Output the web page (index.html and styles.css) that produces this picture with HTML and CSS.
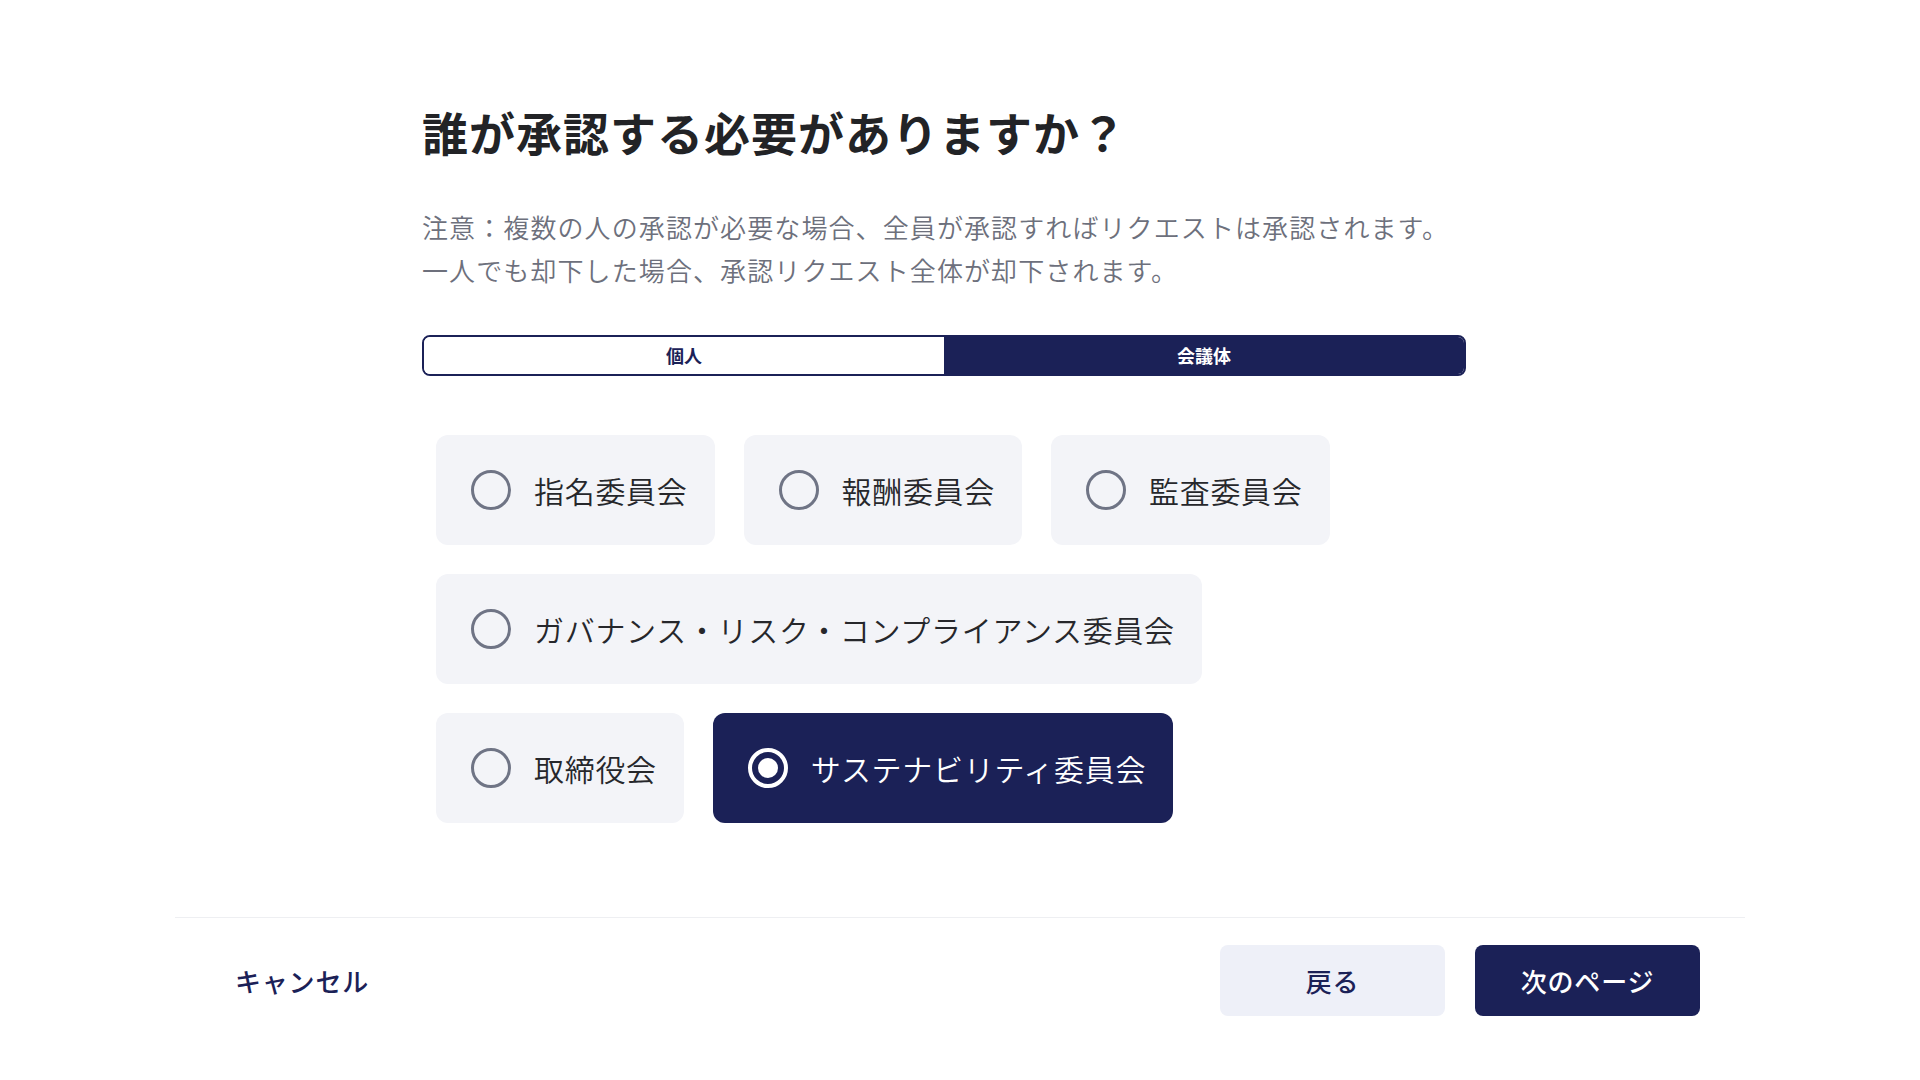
FILE: index.html
```html
<!DOCTYPE html>
<html lang="ja">
<head>
<meta charset="utf-8">
<title>承認者の選択</title>
<link rel="stylesheet" href="styles.css">
</head>
<body>
<div class="page">
  <main class="content">
    <h1 class="title">誰が承認する必要がありますか？</h1>
    <p class="note">注意：複数の人の承認が必要な場合、全員が承認すればリクエストは承認されます。<br>一人でも却下した場合、承認リクエスト全体が却下されます。</p>
    <div class="segment">
      <button class="seg">個人</button>
      <button class="seg seg-active">会議体</button>
    </div>
    <div class="options">
      <div class="row">
        <div class="card"><span class="radio"></span><span class="label">指名委員会</span></div>
        <div class="card"><span class="radio"></span><span class="label">報酬委員会</span></div>
        <div class="card"><span class="radio"></span><span class="label">監査委員会</span></div>
      </div>
      <div class="row">
        <div class="card"><span class="radio"></span><span class="label">ガバナンス・リスク・コンプライアンス委員会</span></div>
      </div>
      <div class="row">
        <div class="card"><span class="radio"></span><span class="label">取締役会</span></div>
        <div class="card card-selected"><span class="radio radio-on"></span><span class="label">サステナビリティ委員会</span></div>
      </div>
    </div>
  </main>
  <footer class="footer">
    <button class="cancel">キャンセル</button>
    <div class="actions">
      <button class="btn btn-back">戻る</button>
      <button class="btn btn-next">次のページ</button>
    </div>
  </footer>
</div>
</body>
</html>
```

FILE: styles.css
```css
* { box-sizing: border-box; }
html, body {
  margin: 0;
  padding: 0;
  background: #ffffff;
  font-family: "Noto Sans CJK JP", "Noto Sans", sans-serif;
}
button {
  font-family: inherit;
  border: none;
  background: none;
  padding: 0;
  margin: 0;
  cursor: pointer;
}
.page {
  width: 1920px;
  height: 1080px;
}
.content {
  padding: 101px 0 0 422px;
  width: 1466px;
}
.title {
  margin: 0;
  font-size: 46px;
  line-height: 60px;
  font-weight: 700;
  color: #222326;
  letter-spacing: 1px;
}
.note {
  margin: 44px 0 0 0;
  font-size: 26px;
  line-height: 43px;
  color: #6d707c;
  letter-spacing: 1.1px;
  font-weight: 350;
}
.segment {
  margin-top: 44px;
  width: 1044px;
  height: 41px;
  display: flex;
  border: 2px solid #1b2157;
  border-radius: 8px;
  overflow: hidden;
}
.seg {
  flex: 1;
  font-size: 18px;
  font-weight: 700;
  color: #1b2157;
  background: #ffffff;
  line-height: 37px;
}
.seg-active {
  background: #1b2157;
  color: #ffffff;
}
.options {
  margin: 59px 0 0 14px;
  display: flex;
  flex-direction: column;
  gap: 29px;
}
.row {
  display: flex;
  gap: 29px;
}
.card {
  display: flex;
  align-items: center;
  gap: 23px;
  height: 110px;
  padding: 0 27px 0 35px;
  border-radius: 12px;
  background: #f3f4f8;
  color: #26272b;
  font-size: 30px;
  letter-spacing: 0.7px;
  font-weight: 350;
}
.radio {
  width: 40px;
  height: 40px;
  border-radius: 50%;
  border: 3.5px solid #6f7485;
  flex: none;
  display: flex;
  align-items: center;
  justify-content: center;
}
.label {
  line-height: 40px;
}
.card-selected {
  background: #1b2157;
  color: #ffffff;
}
.radio-on {
  border: 4px solid #ffffff;
}
.radio-on::after {
  content: "";
  width: 20px;
  height: 20px;
  border-radius: 50%;
  background: #ffffff;
}
.footer {
  margin: 94px 175px 0 175px;
  border-top: 1px solid #eeeff2;
  padding: 27px 45px 0 60px;
  display: flex;
  justify-content: space-between;
  align-items: center;
}
.cancel {
  font-size: 26px;
  font-weight: 500;
  color: #1b2157;
  letter-spacing: 0.8px;
  line-height: 71px;
}
.actions {
  display: flex;
  gap: 30px;
}
.btn {
  width: 225px;
  height: 71px;
  border-radius: 8px;
  font-size: 26px;
  font-weight: 500;
  letter-spacing: 0.8px;
}
.btn-back {
  background: #eef0f8;
  color: #1b2157;
}
.btn-next {
  background: #1b2157;
  color: #ffffff;
}
```
